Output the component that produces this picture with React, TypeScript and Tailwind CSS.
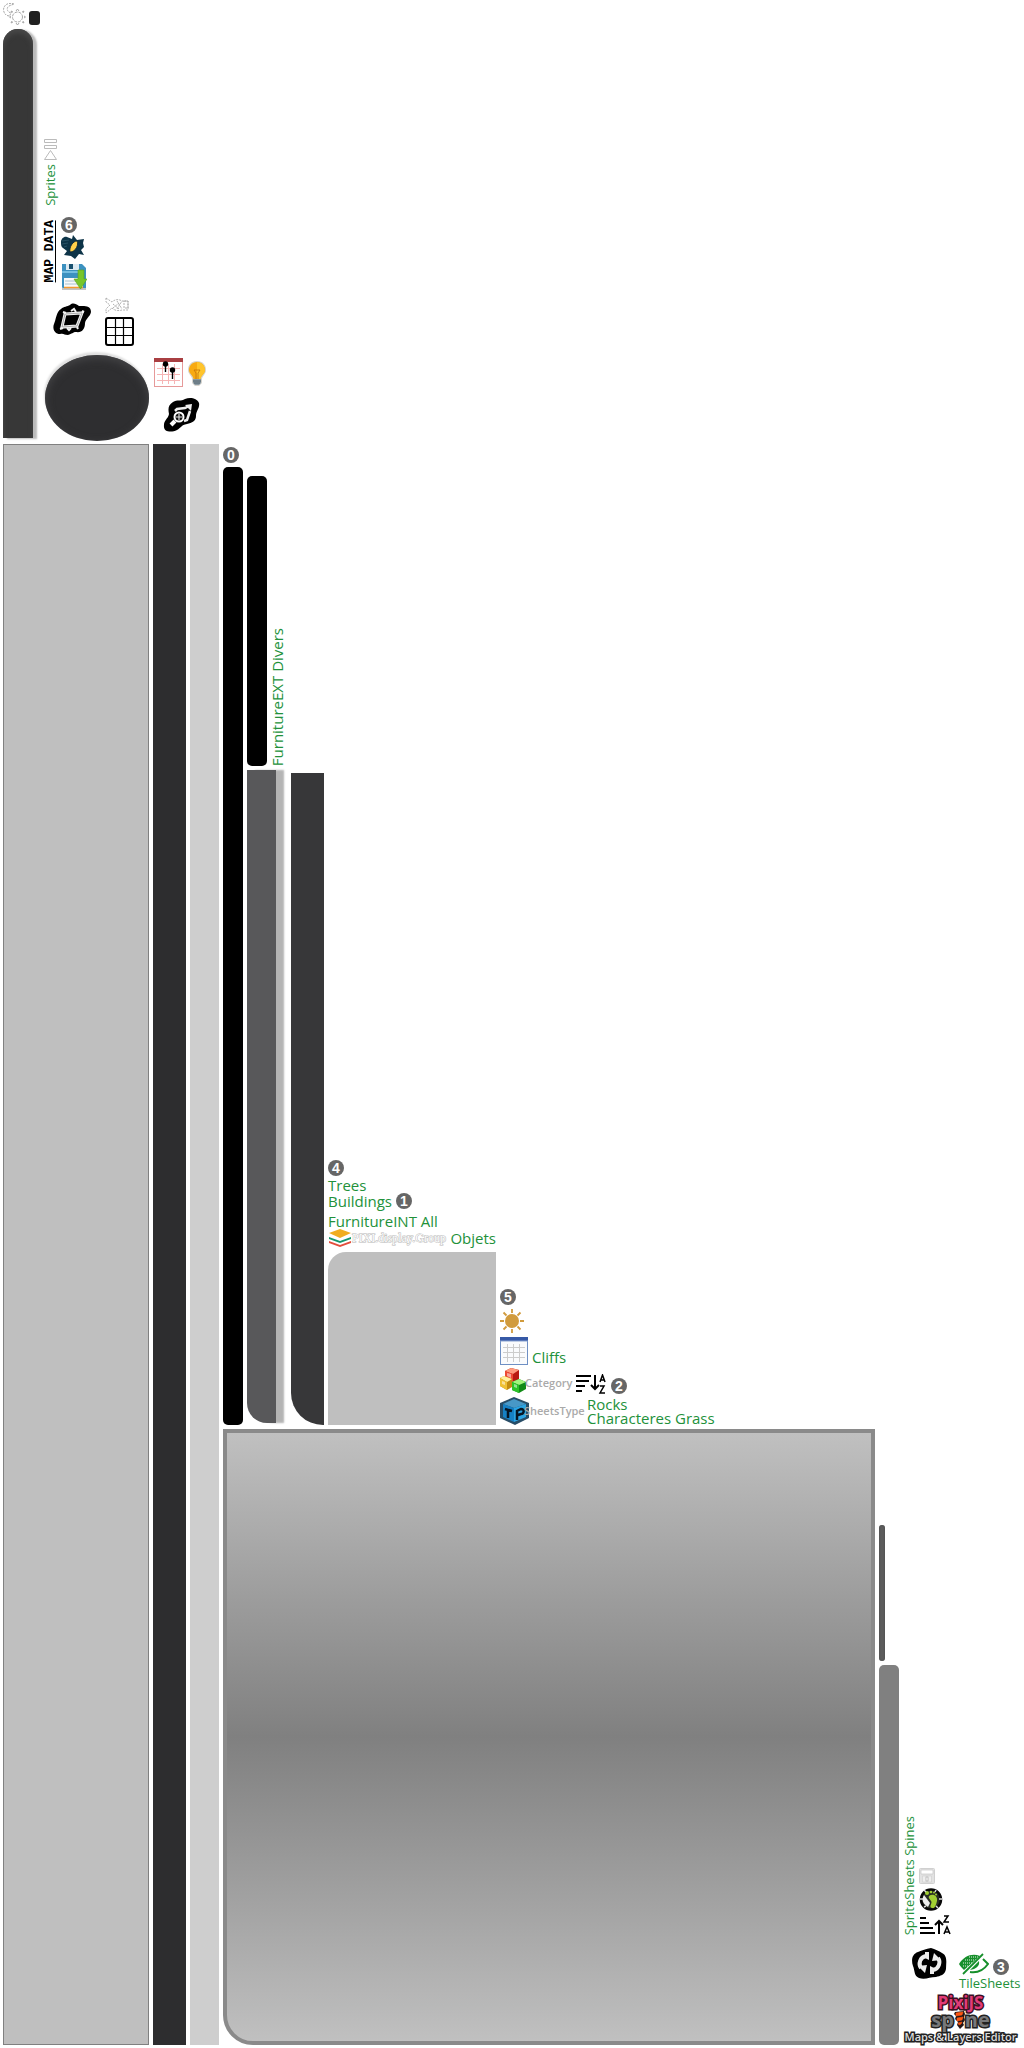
import type { ReactNode } from "react";

const SANS = "font-['Open_Sans','Noto_Sans',sans-serif]";

function Badge({ n }: { n: number }) {
  return (
    <span className="flex size-4 shrink-0 items-center justify-center rounded-full bg-[#666] font-['Liberation_Sans',sans-serif] text-[14px] leading-4 font-bold text-white">
      {n}
    </span>
  );
}

function Label({ children }: { children: ReactNode }) {
  return <span className="text-[15px] leading-4 whitespace-nowrap text-[#22913a]">{children}</span>;
}

function VerticalLabel({ children }: { children: ReactNode }) {
  return (
    <span className="rotate-180 leading-[12px] whitespace-nowrap text-[#22913a] [writing-mode:vertical-rl]">
      {children}
    </span>
  );
}

function DayNightIcon() {
  return (
    <svg width="23" height="23" viewBox="0 0 23 23" fill="none" stroke="#a8a8a8" strokeWidth="1">
      <path strokeDasharray="2 1" d="M11 1C5-1 .5 2 .5 7c.5 4 3 6 6 6L8 10C4 9 3 5 6 3c2-1 3-1 5-2z" />
      <circle cx="14.500" cy="14" r="5" strokeDasharray="3 1" />
      <path d="m13 8 1.500-2L16 8m3 1 2-1-1 2m1 3 1.500 1-1.500 1m-1 3 1 2-2-1m-3 1-1.500 2L13 20m-3-1-2 1 1-2m-1-3-1.500-1L8 13m1-3-1-2 2 1" />
    </svg>
  );
}

function PlayPauseIcon() {
  return (
    <svg width="13" height="21" viewBox="0 0 13 21" fill="none" stroke="#bbb" strokeWidth="1">
      <path d="M.5.500h12v3H.500zM.5 6.500h12v3H.500zM6.500 11.500l6 9H.500z" />
    </svg>
  );
}

function SpotlightIcon() {
  return (
    <svg width="24" height="26" viewBox="0 0 24 26">
      <path d="M0 7c0-3 3-6 6-5l5 2 1-4 4 5 7-1-1 4 1 4-3 3 3 5-5-1-4 5-4-3-7-1 3-4-4-3C0 12 0 9 0 7z" fill="#0d3448" />
      <path d="M9 17c-1-5 3-11 7-11 2 3-1 11-7 11z" fill="#ffd04a" stroke="#06202e" strokeWidth=".8" />
      <path d="m1 6 7-1M1 9l6-1m-4 4 3-1" stroke="#2f586c" strokeWidth=".8" fill="none" />
    </svg>
  );
}

function SaveIcon() {
  return (
    <svg width="26" height="28" viewBox="0 0 26 28">
      <path d="M1 1h20l4 4v20H2c-1 0-1-1-1-1z" fill="#3c91c0" />
      <path d="M1 25h24v2H1z" fill="#c4c4c4" />
      <path d="M5 1h13v6H5z" fill="#dceaf2" /><path d="M8 1h4v5H8z" fill="#17506f" />
      <path d="M1 9h22" stroke="#74bde0" strokeWidth="2" />
      <path d="M3 15h19v9H3z" fill="#f9f9f9" /><path d="M4 18h12M4 21h12" stroke="#a8c2d0" />
      <path d="M3 24.500h19" stroke="#f39a31" strokeWidth="1.500" />
      <path d="M17 7h6v9h3l-6.500 10L13 16h4z" fill="#77c62b" stroke="#57a319" strokeWidth=".6" />
    </svg>
  );
}

function FrameIcon() {
  return (
    <svg width="39" height="34" viewBox="0 0 39 34">
      <path d="M8 6c3-3 6-2 9-4 3-3 6-1 9 1 5 0 12-1 12 6-1 5-5 6-6 11 0 6-3 10-9 9-3 0-4 2-8 3-4 0-4-2-8-1-5 0-8-5-6-10 2-4 2-12 7-15z" fill="#000" />
      <path d="m12 11 17-1-5 13-15 1z" fill="none" stroke="#f2f2f2" strokeWidth="3" />
      <path d="m12 11 17-1-5 13-15 1z" fill="none" stroke="#999" strokeWidth=".8" />
      <path d="m18 8 3-2 2 3m-9 16 2 2 2-2M10 9l3 1m16-2 2 1m-7 15 1 2M7 26l3-1" fill="none" stroke="#f2f2f2" strokeWidth="2" />
    </svg>
  );
}

function FishIcon() {
  return (
    <svg width="25" height="17" viewBox="0 0 25 17" fill="none" stroke="#a8a8a8" strokeWidth=".9" strokeDasharray="2 1">
      <path d="M1 1v4l4 3-4 4v4l6-5M1 1l6 4c3-3 7-3 10-1h6v9h-6c-3 1-7 1-10-2m1-4 6 5m-6-1 6-5m-2-2 5 8m-5 0 5-8m2 0h4v7h-4z" />
    </svg>
  );
}

function GridIcon() {
  return (
    <svg width="29" height="29" viewBox="0 0 29 29" fill="none" stroke="#000">
      <rect x="1" y="1" width="27" height="27" rx="2" strokeWidth="2" />
      <path d="M10.500 1v27M18.500 1v27M1 10.500h27M1 18.500h27" strokeWidth="1.200" />
    </svg>
  );
}

function PinnedGridIcon() {
  return (
    <svg width="29" height="29" viewBox="0 0 29 29">
      <rect x=".5" y=".5" width="28" height="28" fill="#fff" stroke="#e69a9a" />
      <path d="M0 0h29v4H0z" fill="#a93f42" />
      <path d="M3 10.500h23M3 16.500h23M3 22.500h23M8.500 6v20M14.500 6v20M20.500 6v20" stroke="#f6b5b5" />
      <path d="M11.500 6v8M18.500 13v8" stroke="#000" strokeWidth="1.400" />
      <circle cx="11.500" cy="6" r="2.700" /><circle cx="18.500" cy="12" r="2.700" />
    </svg>
  );
}

function BulbIcon() {
  return (
    <svg width="20" height="27" viewBox="0 0 20 27">
      <path d="M10 1C4 1 1 5 1 10c0 4 4 6 4 9v4l3 3h4l3-3v-4c0-3 4-5 4-9 0-5-3-9-9-9z" fill="#d7d4ce" />
      <path d="M10 2C5 2 2 6 2 10s4 5 4.500 9h7c.5-4 4.500-5 4.500-9s-3-8-8-8z" fill="#f8aa12" />
      <path d="M10 2c5 0 8 4 8 8s-4 5-4.500 9H10z" fill="#ffc52c" />
      <path d="m7 10 2 3v6m4-9-2 3v6M7 10h6" fill="none" stroke="#c7780b" strokeWidth=".9" />
      <path d="M6 19h8v4l-2 2H8l-2-2z" fill="#8b9ba5" /><path d="M6 21h8m-7 2h6" stroke="#50606b" />
    </svg>
  );
}

function ZoomAreaIcon() {
  return (
    <svg width="37" height="35" viewBox="0 0 37 35">
      <path d="M10 4c4-3 8 0 12-3 5-2 12-1 14 4 1 5-3 8-3 13 0 5-4 7-9 8-6 1-6 4-10 6-6 3-14 2-13-5 0-5 4-6 5-11-1-5-1-9 4-12z" />
      <path d="m12 13 2-2 8-1 4-2m1 5-3 9-3 1" fill="none" stroke="#eee" strokeWidth="2.500" />
      <path d="m22 7 7-1-1 7z" fill="#eee" />
      <circle cx="16" cy="19" r="4.500" fill="#111" stroke="#fff" strokeWidth="2" />
      <path d="M16 16v6m-3-3h6" stroke="#ddd" strokeWidth="1.200" />
      <path d="m12 23-4 4" stroke="#fff" strokeWidth="4" />
    </svg>
  );
}

function LayersIcon() {
  return (
    <svg className="shrink-0" width="24" height="18" viewBox="0 0 24 18">
      <path d="m1 12 11 4 11-4v2l-11 4-11-4z" fill="#e34d3c" />
      <path d="m1 8 11 4 11-4v2l-11 4-11-4z" fill="#15976d" />
      <path d="m1 4 11-4 11 4-11 5z" fill="#f0ad20" />
    </svg>
  );
}

function SunIcon() {
  return (
    <svg width="24" height="24" viewBox="0 0 24 24">
      <circle cx="12" cy="12" r="7" fill="#d19b3d" />
      <path d="M12 0v4m0 16v4M0 12h4m16 0h4M3.500 3.500l3 3m11 11 3 3m0-17-3 3m-11 11-3 3" stroke="#d19b3d" strokeWidth="1.800" />
    </svg>
  );
}

function TableIcon() {
  return (
    <svg width="28" height="28" viewBox="0 0 28 28">
      <rect x=".5" y=".5" width="27" height="27" fill="#fafbfd" stroke="#6e8fc4" />
      <path d="M0 0h28v4H0z" fill="#3659a6" /><path d="M0 4h28" stroke="#86a1d0" />
      <path d="M3 10.500h22M3 15.500h22M3 20.500h22M7.500 7v18M13.500 7v18M19.500 7v18" stroke="#ccc" />
    </svg>
  );
}

function CubesIcon() {
  return (
    <svg className="shrink-0" width="26" height="26" viewBox="0 0 26 26">
      <path d="m5 3 6-3 8 2v10l-6 3-8-3z" fill="#b91b12" /><path d="m5 3 6-3 8 2-6 4z" fill="#ff9a7c" /><path d="m5 3 8 3v9l-8-3z" fill="#ee4a34" />
      <path d="m0 10 4-2 8 3v8l-5 3-7-4z" fill="#c28c12" /><path d="m0 10 4-2 8 3-5 3z" fill="#fff0a0" /><path d="m0 10 7 4v8l-7-4z" fill="#efc136" />
      <path d="m12 14 7-3 7 3v7l-7 4-7-3z" fill="#118b16" /><path d="m12 14 7-3 7 3-7 3z" fill="#a2f47d" /><path d="m12 14 7 3v8l-7-3z" fill="#2dc328" />
      <path d="m7 5 4 1v4L7 8zm7 11 3 1v3l-3-1zM2 13l3 1v3l-3-1z" fill="#fff" opacity=".5" />
    </svg>
  );
}

function PackerIcon() {
  return (
    <svg className="shrink-0" width="29" height="28" viewBox="0 0 29 28">
      <path d="m0 6 14-6 15 6v15l-14 7L0 21z" fill="#284d67" />
      <path d="m3 7 11-5 12 5-12 4z" fill="#4898c7" /><path d="m3 7 11 4v14L3 20z" fill="#1681c5" /><path d="m14 11 12-4v13l-12 5z" fill="#2ba4e4" />
      <path d="m5 12 7 2m-4-1v8m9 2v-9l4-2c4 0 3 5 0 5l-3 1" fill="none" stroke="#061523" strokeWidth="2.500" />
    </svg>
  );
}

function SortIcon({ up = false }: { up?: boolean }) {
  return (
    <svg className="shrink-0" width="32" height="20" viewBox="0 0 32 20" fill="none" stroke="#000" strokeWidth="2">
      <path d={up ? "M1 3h6M1 8h9M1 13h13M1 18h15" : "M1 2h15M1 7h13M1 12h9M1 17h6"} />
      <path d={up ? "M20 19V6m-4 4 4-4 4 4" : "M20 1v14m-4-4 4 4 4-4"} />
      <path d={up ? "M25 1h4l-4 6h5" : "m25 8 2.500-7L30 8m-4-2h3"} strokeWidth="1.500" />
      <path d={up ? "m25 19 3-7 3 7m-5-2h4" : "M25 12h4l-4 7h5"} strokeWidth="1.500" />
    </svg>
  );
}

function FaintSaveIcon() {
  return (
    <svg width="16" height="16" viewBox="0 0 16 16">
      <rect x=".5" y=".5" width="15" height="15" rx="1" fill="#e2e2e2" stroke="#d0d0d0" />
      <path d="M2 2h12v4H2z" fill="#fff" stroke="#c5c5c5" strokeWidth=".7" />
      <path d="M3.500 8h9v6h-9z" fill="#eee" stroke="#ccc" strokeWidth=".6" /><rect x="7" y="9" width="2" height="4" fill="#fff" stroke="#aaa" strokeWidth=".7" />
    </svg>
  );
}

function FootIcon() {
  return (
    <svg width="24" height="25" viewBox="0 0 24 25">
      <circle cx="12" cy="12.500" r="10" fill="#282d25" stroke="#080808" strokeWidth="2.500" />
      <path d="M5 8c-3 5-1 9 4 12l2-4-3-4z" fill="#eee" />
      <path d="M10 9c4-3 9 0 8 5-1 4-2 8-5 7-4-1 1-5-1-7-1-2-3-3-2-5z" fill="#a1cf32" />
      <circle cx="8" cy="6" r="2" fill="#a1cf32" /><circle cx="12" cy="5" r="1.300" fill="#a1cf32" /><circle cx="15" cy="5.500" r="1" fill="#a1cf32" /><circle cx="17" cy="7.500" r="1" fill="#a1cf32" />
      <path d="M1 12h3m16 0h3M5 3l2 2m10-2-1 2M5 20l2-1m10 0 2 2" stroke="#ddd" strokeWidth="1.500" />
    </svg>
  );
}

function RefreshIcon() {
  return (
    <svg className="shrink-0" width="35" height="31" viewBox="0 0 35 31">
      <path d="M6 4c4-2 8-3 13-4 4 1 8 3 11 5 6 3 4 10 4 16-1 6-6 7-10 8-6 0-11 3-17 1-5-2-4-7-6-12-2-6-1-12 5-14z" />
      <path d="M14 8c-6 1-8 8-5 12m12 2c6-1 8-8 5-12" fill="none" stroke="#eee" strokeWidth="4" />
      <path d="M13 4h4v8l-4-2zM6 18l9-1-2 8zm16 8h-4v-8l4 2zm7-14-9 1 2-8z" fill="#eee" />
    </svg>
  );
}

function HiddenEyeIcon() {
  return (
    <svg className="shrink-0" width="30" height="22" viewBox="0 0 30 22">
      <path d="M0 11C5 3 13 0 21 3L5 17c-2-2-4-4-5-6z" fill="#168f2b" />
      <path d="M4 10h12M6 7h12M10 4h9M4 13h8" stroke="#fff" strokeWidth=".9" strokeDasharray="1 1" />
      <path d="M20 8c1 5-3 8-9 9z" fill="#168f2b" />
      <path d="M4 21 24 1" fill="none" stroke="#168f2b" strokeWidth="1.800" />
      <path d="m24 6 5 5c-5 7-12 9-18 8" fill="none" stroke="#168f2b" strokeWidth="2" />
    </svg>
  );
}

function BonesIcon() {
  return (
    <svg className="shrink-0" width="11" height="18" viewBox="0 0 11 18">
      <path d="M1 1 10 0l1 3-1 3 1 3-2 3 1 2-4 4-3-4 1-3-3-3 1-3-2-2z" fill="#241616" />
      <path d="m2 2 7-1-1 3-6 1zm1 5 6-1-1 3-5 1zm1 5 4-1-1 2-2 1z" fill="#ff5612" stroke="#ff5612" strokeWidth=".6" />
    </svg>
  );
}

function Logo() {
  return (
    <div className="mt-[3px] flex w-[115px] flex-col items-center">
      <span className="text-[17px] leading-[17px] font-bold text-[#e13b78] [-webkit-text-stroke:3px_#3b1023] [paint-order:stroke]">PixiJS</span>
      <div className="flex items-center text-[20px] leading-[18px] font-bold text-[#77787a] [-webkit-text-stroke:3px_#222] [paint-order:stroke]">
        <span>sp</span>
        <BonesIcon />
        <span>ne</span>
      </div>
      <span className="text-[11px] leading-[16px] font-semibold whitespace-nowrap text-[#ddd] [-webkit-text-stroke:3px_#222] [paint-order:stroke]">
        Maps &amp; Layers Editor
      </span>
    </div>
  );
}

function TopStrip() {
  return (
    <section className="flex h-[441px] shrink-0 items-end">
      <div className="flex w-[41px] flex-col gap-[3px] self-stretch pt-[3px]">
        <div className="flex items-end gap-[3px]">
          <DayNightIcon />
          <span className="mb-px h-[14px] w-[11px] rounded-[3px] bg-[#202020]" />
        </div>
        <div className="mb-[3px] w-[30px] flex-1 rounded-t-full bg-[#373737] shadow-[4px_1px_2px_#bbb,inset_0_4px_5px_#484848]" />
      </div>
      <div className="flex w-[105px] flex-col">
        <div className="flex flex-col items-start gap-1 text-[13px]">
          <PlayPauseIcon />
          <VerticalLabel>Sprites</VerticalLabel>
        </div>
        <div className="mt-[11px] flex items-start gap-[5px]">
          <span className="mt-[3px] rotate-180 border-l border-black font-['Liberation_Mono',monospace] text-[13px] leading-[11px] font-bold whitespace-nowrap [writing-mode:vertical-rl]">
            MAP DATA
          </span>
          <div className="flex flex-col gap-[2px]">
            <Badge n={6} />
            <SpotlightIcon />
            <SaveIcon />
          </div>
        </div>
        <div className="mt-[6px] flex items-start gap-[13px] pl-[9px]">
          <span className="pt-[6px]"><FrameIcon /></span>
          <div className="flex flex-col gap-[3px]">
            <FishIcon />
            <GridIcon />
          </div>
        </div>
        <div className="mt-[9px] ml-px h-[86px] rounded-[50%] bg-[#2e2e30] shadow-[-1px_-3px_2px_#e0e0e0,inset_0_3px_8px_#454547]" />
      </div>
      <div className="flex flex-col gap-[11px] pb-[8px] pl-[5px]">
        <div className="flex items-end gap-1">
          <PinnedGridIcon />
          <BulbIcon />
        </div>
        <span className="pl-[9px]"><ZoomAreaIcon /></span>
      </div>
    </section>
  );
}

function MiddleSprites() {
  return (
    <div className="flex h-[981px] shrink-0 items-end gap-1">
      <div className="flex w-5 flex-col gap-1 self-stretch pt-[3px]">
        <Badge n={0} />
        <div className="flex-1 rounded-[5px] bg-black" />
      </div>
      <div className="flex w-10 flex-col gap-1 self-stretch pt-8">
        <div className="flex flex-1 items-end gap-1 text-[15px]">
          <div className="w-5 self-stretch rounded-[5px] bg-black" />
          <VerticalLabel>FurnitureEXT Divers</VerticalLabel>
        </div>
        <div className="mb-[2px] h-[653px] w-[29px] rounded-bl-[20px] bg-[#58585a] shadow-[8px_0_2px_#b4b4b4]" />
      </div>
      <div className="h-[652px] w-[33px] rounded-bl-[32px] bg-[#373739]" />
      <div className="flex w-[168px] flex-col">
        <Badge n={4} />
        <div className="mt-px flex"><Label>Trees</Label></div>
        <div className="flex items-end gap-1"><Label>Buildings</Label><Badge n={1} /></div>
        <div className="mt-1 flex"><Label>FurnitureINT All</Label></div>
        <div className="mb-[5px] flex items-center">
          <LayersIcon />
          <span className="flex-1 font-['Liberation_Serif',serif] text-[12px] leading-4 whitespace-nowrap text-white [-webkit-text-stroke:1px_#b8b8b8] [paint-order:stroke]">
            PIXI.display.Group
          </span>
          <Label>Objets</Label>
        </div>
        <div className="h-[173px] rounded-tl-[18px] bg-[#bfbfbf]" />
      </div>
      <div className="flex flex-col">
        <Badge n={5} />
        <span className="mt-1"><SunIcon /></span>
        <div className="mt-1 flex items-end gap-1"><TableIcon /><Label>Cliffs</Label></div>
        <div className="mt-[3px] flex items-end">
          <CubesIcon />
          <span className="-ml-px w-[50px] text-[11px] leading-[22px] font-semibold text-[#aaa]">Category</span>
          <SortIcon />
          <span className="pl-1"><Badge n={2} /></span>
        </div>
        <div className="mt-[3px] flex items-end">
          <PackerIcon />
          <span className="-ml-[5px] w-[63px] text-[11px] leading-[28px] font-semibold text-[#aaa]">SheetsType</span>
          <div className="flex flex-col text-[15px] leading-[14px] whitespace-nowrap text-[#22913a]">
            <span>Rocks</span>
            <span>Characteres Grass</span>
          </div>
        </div>
      </div>
    </div>
  );
}

function LowerSprites() {
  return (
    <div className="flex min-h-[500px] flex-1 gap-1">
      <div className="flex-1 rounded-bl-[30px] border-4 border-[#8a8a8a] bg-linear-to-b from-[#c0c0c0] via-[#808080] to-[#c0c0c0]" />
      <div className="flex w-5 flex-col justify-end gap-1">
        <div className="h-[136px] w-[6px] rounded-[3px] bg-[#5c5c5c] shadow-[inset_0_0_2px_#444]" />
        <div className="h-[380px] rounded-[5px] bg-[#808080]" />
      </div>
      <div className="flex w-[118px] flex-col justify-end">
        <div className="flex items-end gap-1 text-[13px]">
          <VerticalLabel>SpriteSheets Spines</VerticalLabel>
          <div className="flex flex-col gap-[3px]">
            <FaintSaveIcon />
            <FootIcon />
            <SortIcon up />
          </div>
        </div>
        <div className="mt-[13px] flex items-start gap-3 pl-[9px]">
          <RefreshIcon />
          <div className="flex flex-col pt-[5px]">
            <div className="flex items-end gap-1"><HiddenEyeIcon /><Badge n={3} /></div>
            <span className="text-[13px] leading-4 text-[#22913a]">TileSheets</span>
          </div>
        </div>
        <Logo />
      </div>
    </div>
  );
}

export default function App() {
  return (
    <main className={`flex min-h-screen flex-col gap-[3px] bg-white px-[3px] pb-[3px] ${SANS}`}>
      <TopStrip />
      <section className="flex flex-1 gap-1">
        <div className="w-[146px] shrink-0 border border-[#808080] bg-[#bfbfbf]" />
        <div className="w-[33px] shrink-0 bg-[#2d2d2f]" />
        <div className="w-[29px] shrink-0 bg-[#cecece]" />
        <div className="flex min-w-0 flex-1 flex-col gap-1">
          <MiddleSprites />
          <LowerSprites />
        </div>
      </section>
    </main>
  );
}
